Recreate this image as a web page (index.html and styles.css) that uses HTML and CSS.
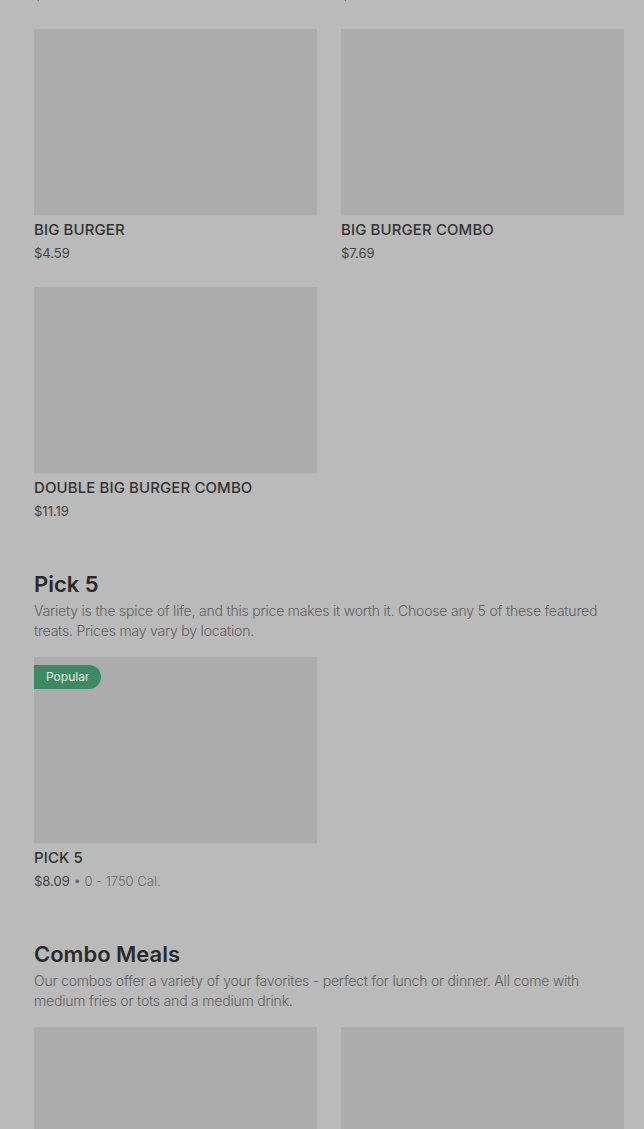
FILE: index.html
```html
<!DOCTYPE html>
<html>
<head>
	<title>Menu</title>
	<meta charset="utf-8">
	<link rel="stylesheet" href="styles.css">
</head>
<body>
  <main class="menu">
  	<section class="category">
  		<div class="grid">
  			<div class="card">
  				<div class="thumb"></div>
  				<div class="name">Little Burger</div>
  				<div class="price">$4.59</div>
  			</div>
  			<div class="card">
  				<div class="thumb"></div>
  				<div class="name">Little Burger Combo</div>
  				<div class="price">$7.69</div>
  			</div>
  			<div class="card">
  				<div class="thumb"></div>
  				<div class="name">Big Burger</div>
  				<div class="price">$4.59</div>
  			</div>
  			<div class="card">
  				<div class="thumb"></div>
  				<div class="name">Big Burger Combo</div>
  				<div class="price">$7.69</div>
  			</div>
  			<div class="card">
  				<div class="thumb"></div>
  				<div class="name">Double Big Burger Combo</div>
  				<div class="price">$11.19</div>
  			</div>
  		</div>
  	</section>

  	<section class="category">
  		<h2>Pick 5</h2>
  		<p class="intro">Variety is the spice of life, and this price makes it worth it. Choose any 5 of these featured treats. Prices may vary by location.</p>
  		<div class="grid">
  			<div class="card">
  				<div class="thumb">
  					<span class="badge">Popular</span>
  				</div>
  				<div class="name">Pick 5</div>
  				<div class="price">$8.09 <span class="cal">&bull; 0 - 1750 Cal.</span></div>
  			</div>
  		</div>
  	</section>

  	<section class="category">
  		<h2>Combo Meals</h2>
  		<p class="intro">Our combos offer a variety of your favorites - perfect for lunch or dinner. All come with medium fries or tots and a medium drink.</p>
  		<div class="grid">
  			<div class="card">
  				<div class="thumb"></div>
  				<div class="name">Cheeseburger Combo</div>
  				<div class="price">$8.49</div>
  			</div>
  			<div class="card">
  				<div class="thumb"></div>
  				<div class="name">Bacon Cheeseburger Combo</div>
  				<div class="price">$9.49</div>
  			</div>
  		</div>
  	</section>
  </main>
</body>
</html>
```

FILE: styles.css
```css
html, body {
	margin: 0;
	padding: 0;
	background: #bababa;
	font-family: Inter, "Liberation Sans", sans-serif;
	color: #2c2c2c;
	overflow: hidden;
}
.menu {
	margin-top: -229px;
	padding: 0 20px 0 34px;
}
.category + .category {
	margin-top: 49px;
}
.category h2 {
	margin: 0;
	font-size: 22px;
	line-height: 28px;
	font-weight: 600;
	letter-spacing: 0;
	color: #2a2a2a;
}
.intro {
	margin: 3px 0 16px 0;
	font-size: 14px;
	line-height: 20px;
	font-weight: 300;
	letter-spacing: -0.2px;
	color: #5e5e5e;
}
.grid {
	display: grid;
	grid-template-columns: 283px 283px;
	column-gap: 24px;
	row-gap: 24px;
}
.thumb {
	position: relative;
	height: 187px;
	background: #acacac;
	border-bottom: 1px solid #b3b3b3;
	box-sizing: border-box;
}
.badge {
	position: absolute;
	left: 0;
	top: 8px;
	height: 24px;
	line-height: 24px;
	padding: 0 12px;
	background: #3d8a62;
	color: #e4ece7;
	font-size: 12px;
	border-radius: 0 12px 12px 0;
}
.name {
	margin-top: 4px;
	font-size: 15px;
	line-height: 20px;
	font-weight: 500;
	letter-spacing: 0.1px;
	text-transform: uppercase;
	color: #333;
}
.price {
	margin-top: 3px;
	font-size: 13px;
	line-height: 20px;
	color: #444;
}
.cal {
	color: #666;
	font-weight: 300;
}
```
